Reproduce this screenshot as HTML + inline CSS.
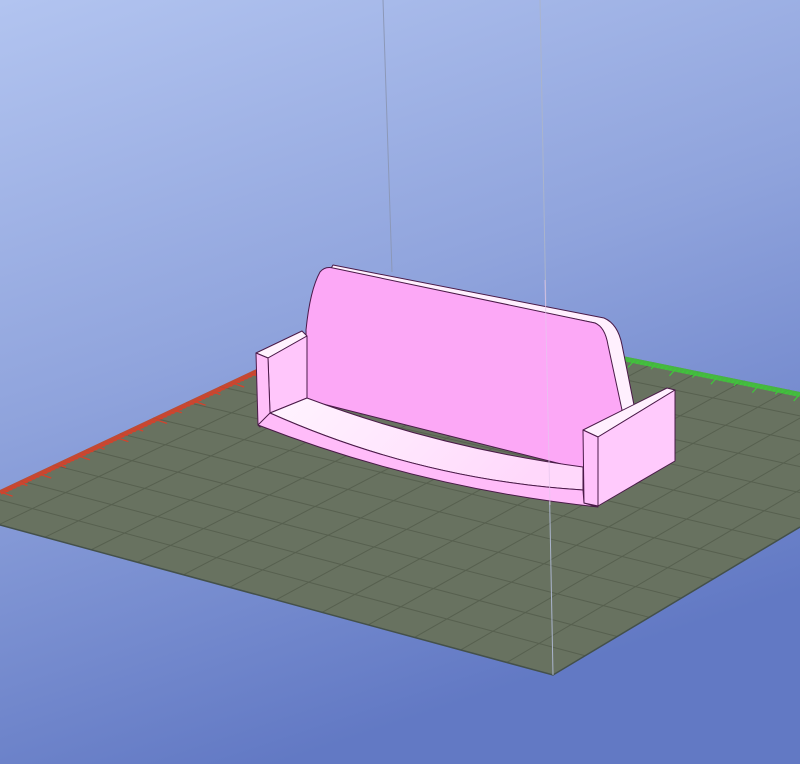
<!DOCTYPE html>
<html><head><meta charset="utf-8"><style>
html,body{margin:0;padding:0;width:800px;height:764px;overflow:hidden}
svg{display:block}
</style></head><body>
<svg id="s" width="800" height="764" viewBox="0 0 800 764" xmlns="http://www.w3.org/2000/svg">
<defs>
<linearGradient id="bg" x1="0" y1="0" x2="0.35" y2="1">
<stop offset="0" stop-color="#b2c4f0"/>
<stop offset="0.5" stop-color="#8fa3dc"/>
<stop offset="1" stop-color="#6279c4"/>
</linearGradient>
<linearGradient id="seat" x1="0" y1="0" x2="1" y2="0.3">
<stop offset="0" stop-color="#fff4ff"/><stop offset="0.6" stop-color="#ffe4fd"/><stop offset="1" stop-color="#ffd8fb"/>
</linearGradient>
<clipPath id="pc"><polygon points="0,490 386,308 800,392 800,527 553,675 0,525"/></clipPath>
</defs>
<rect width="800" height="764" fill="url(#bg)"/>
<polygon points="0,490 386,308 800,392 800,527 553,675 0,525" fill="#687260"/>
<g id="grid" clip-path="url(#pc)" stroke="#57604f" stroke-width="1" fill="none"></g>
<polyline points="0,525 553,675 800,527" fill="none" stroke="#44504a" stroke-width="1.5"/>
<g clip-path="url(#pc)">
<line x1="0" y1="492" x2="386" y2="310" stroke="#d8402a" stroke-width="6" opacity="0.8"/>
<g id="rt" stroke="#d8402a" stroke-width="1.2"></g>
<line x1="386" y1="310" x2="800" y2="394" stroke="#3ec83a" stroke-width="6" opacity="0.8"/>
<g id="gt" stroke="#3ec83a" stroke-width="1.2"></g>
</g>
<line x1="383" y1="0" x2="392" y2="272" stroke="#8c98b8" stroke-width="1"/>
<line x1="540" y1="0" x2="553" y2="675" stroke="#aab4cc" stroke-width="1"/>
<g stroke="#4a1a48" stroke-width="1" stroke-linejoin="round">
<path d="M333,265 L604,318 Q618,324 622,345 L634,405 L620,412 L605,340 Q600,325 595,323 L330,270 Z" fill="#fff0fe"/>
<path d="M307,400 L306,330 Q310,290 320,272 Q325,266 333,268 L595,323 Q605,327 608,345 L622,410 L585,470 L307,400 Z" fill="#fca8f6"/>
<path d="M256,353 L302,331 L307,336 L268,358 Z" fill="#fff2fe"/>
<path d="M268,358 L307,336 L307,398 L270,413 Z" fill="#ffc6fb"/>
<path d="M256,353 L268,358 L270,413 L260,427 L258,425 Z" fill="#ffbff9"/>
<path d="M270,413 L307,398 Q440,448 583,467 L583,490 Q420,480 270,413 Z" fill="url(#seat)"/>
<path d="M258,425 L270,413 Q420,480 583,490 L584,503 L598,507 Q420,488 258,425 Z" fill="#ffbcf9"/>
<path d="M583,430 L667,388 L675,390 L598,437 Z" fill="#fff0fe"/>
<path d="M583,430 L598,437 L598,506 L584,503 Z" fill="#ffc2fb"/>
<path d="M598,437 L675,390 L675,461 L598,506 Z" fill="#ffcafc"/>
</g>
<line x1="545" y1="280" x2="550" y2="505" stroke="#e6c6ee" stroke-width="1" opacity="0.7"/>
</svg>
<script>
(function(){
var B=[386,308],L=[-47,512],F=[553,675],R=[970,425];
function lerp(a,b,t){return [a[0]+(b[0]-a[0])*t,a[1]+(b[1]-a[1])*t];}
var g=document.getElementById('grid'),h='';
var n=13;
for(var i=1;i<n;i++){var t=i/n;
var p=lerp(B,R,t),q=lerp(L,F,t);h+='<line x1="'+p[0]+'" y1="'+p[1]+'" x2="'+q[0]+'" y2="'+q[1]+'"/>';
p=lerp(B,L,t);q=lerp(R,F,t);h+='<line x1="'+p[0]+'" y1="'+p[1]+'" x2="'+q[0]+'" y2="'+q[1]+'"/>';}
g.innerHTML=h;
var rt='',gt='';
for(var k=0;k<=100;k++){var t=k/100;
var p=[386-386*t,310+182*t];var len=(k%10==0)?14:(k%5==0?9:5);
rt+='<line x1="'+p[0]+'" y1="'+p[1]+'" x2="'+(p[0]+len*0.9)+'" y2="'+(p[1]+len*0.3)+'"/>';
var q=[386+414*t,310+84*t];
gt+='<line x1="'+q[0]+'" y1="'+q[1]+'" x2="'+(q[0]-len*0.45)+'" y2="'+(q[1]+len*0.5)+'"/>';}
document.getElementById('rt').innerHTML=rt;document.getElementById('gt').innerHTML=gt;
})();
</script>
</body></html>
